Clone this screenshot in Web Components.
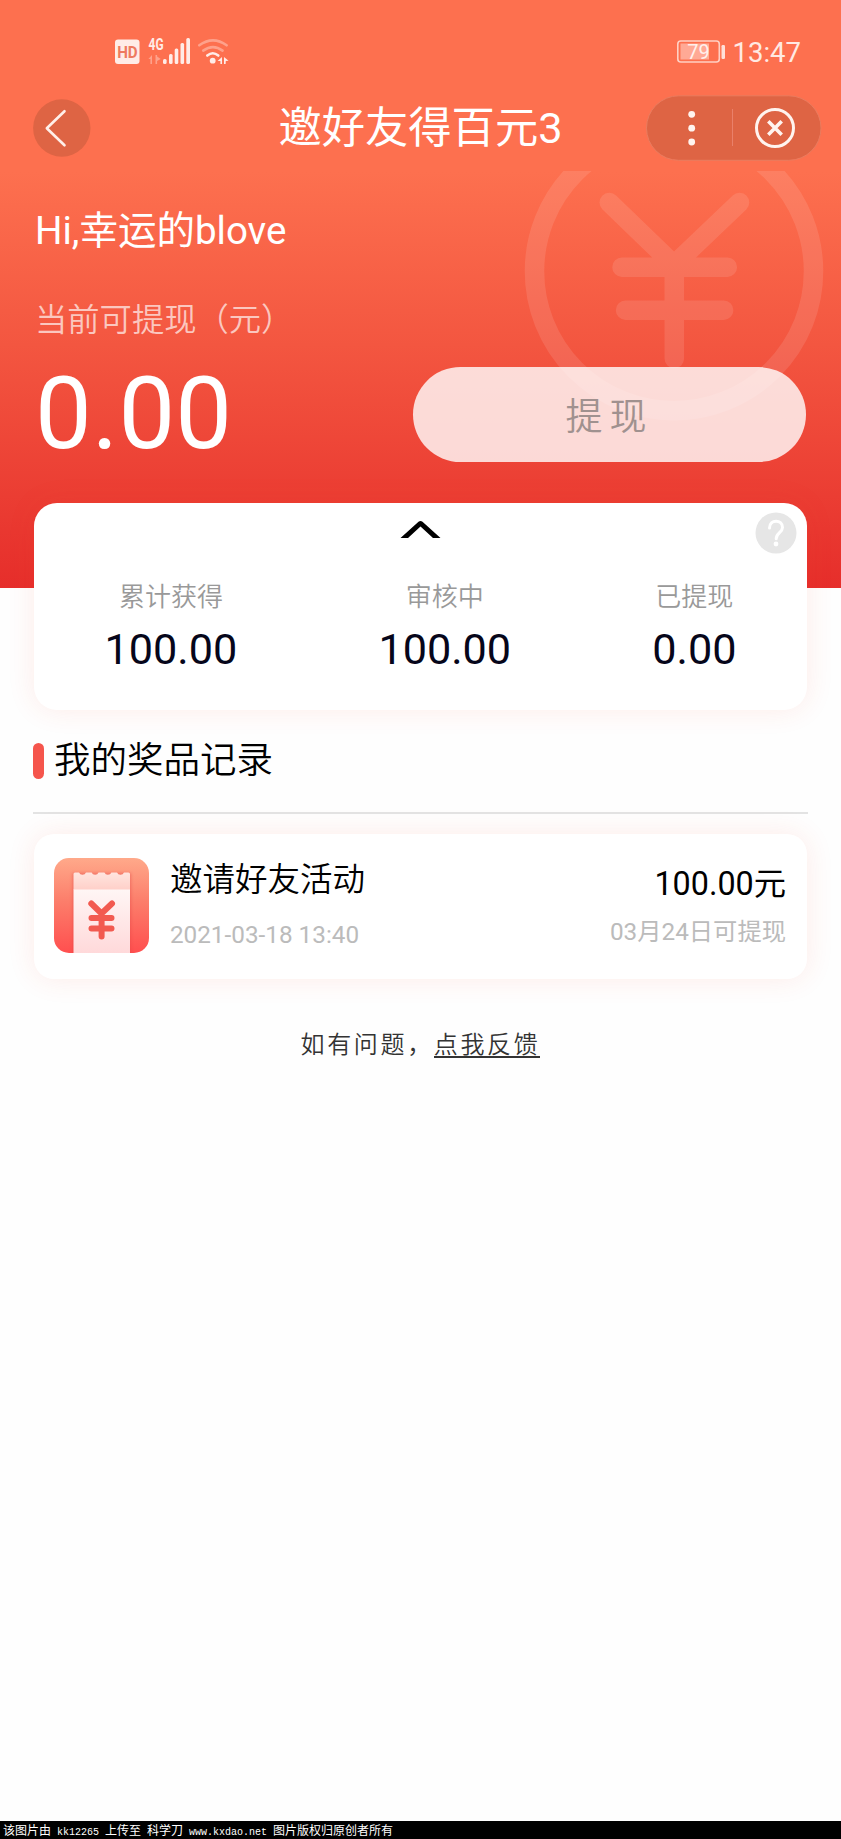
<!DOCTYPE html>
<html lang="zh-CN">
<head>
<meta charset="utf-8">
<title>邀好友得百元3</title>
<style>
html,body{margin:0;background:#fff}
body{font-family:Roboto,"Noto Sans CJK SC",sans-serif;color:#000}
</style>
</head>
<body>
<reward-page></reward-page>
<script>
function define(name, html) {
  const t = document.createElement('template');
  t.innerHTML = html;
  customElements.define(name, class extends HTMLElement {
    constructor() {
      super();
      this.attachShadow({ mode: 'open' }).appendChild(t.content.cloneNode(true));
    }
  });
}

define('status-bar', `
<style>
:host{display:flex;height:88px;box-sizing:border-box;padding:16px 40px 0 114px;align-items:center;justify-content:space-between;color:#ffe9e3}
.right{display:flex;align-items:center;gap:7px}
.time{font-size:27.500px;line-height:32px;position:relative;top:.5px}
svg{display:block}
</style>
<svg width="118" height="32" viewBox="114 36 118 32" fill="#ffece7">
  <rect x="115" y="39.5" width="24.5" height="24.5" rx="3"/>
  <text x="127.4" y="57.6" font-family="Roboto,sans-serif" font-size="16.5" font-weight="700" text-anchor="middle" textLength="20.5" lengthAdjust="spacingAndGlyphs" fill="#ee7a60">HD</text>
  <text x="148.6" y="50.2" font-family="Roboto,sans-serif" font-size="16" font-weight="700" textLength="15" lengthAdjust="spacingAndGlyphs">4G</text>
  <g opacity=".4"><path d="M152 55v9h-1.600v-5h-2zM155.500 55v9h1.600v-3l3.600-2-3.600-2.500v-1.500z"/></g>
  <rect x="163" y="59" width="3.600" height="5" rx="1.500"/>
  <rect x="169" y="54" width="3.600" height="10" rx="1.500"/>
  <rect x="174.700" y="48.500" width="3.600" height="15.500" rx="1.500"/>
  <rect x="180.500" y="43" width="3.600" height="21" rx="1.500"/>
  <rect x="186.300" y="38" width="3.700" height="26" rx="1.500"/>
  <g fill="none" stroke="#ffece7" stroke-width="2.600" stroke-linecap="round">
    <path d="M199.300 45.300Q213 35.500 226.600 45.300" opacity=".4"/>
    <path d="M203.200 50.600Q213 43.500 222.600 50.600" opacity=".4"/>
    <path d="M207.300 55.500Q212.800 51 218.300 55.500"/>
  </g>
  <circle cx="212.700" cy="60.700" r="2.900"/>
  <path d="M222 57v7h-1.600v-3h-2.800zM224 57l4.600 3.800-2.800.2-.2 3H224z"/>
</svg>
<div class="right">
  <svg width="50" height="24" viewBox="675 40 50 24">
    <rect x="676.800" y="41" width="41.500" height="21" rx="3" fill="none" stroke="#ffd0c4" stroke-width="1.600"/>
    <rect x="679.500" y="43.500" width="28.500" height="16" fill="#ffa995"/>
    <rect x="720.500" y="45" width="3.500" height="14" rx="1.200" fill="#ffe0d8"/>
    <text x="697.500" y="59" font-family="Roboto,sans-serif" font-size="20" text-anchor="middle" fill="#fff0ec">79</text>
  </svg>
  <span class="time">13:47</span>
</div>`);

define('nav-bar', `
<style>
:host{display:grid;grid-template-columns:175px 1fr 175px;height:80px;padding:0 20px 0 33px;align-items:center}
h1{margin:0;font-weight:400;font-size:43.300px;line-height:60px;color:#fff;text-align:center;white-space:nowrap;padding:2px 13px 0 0}
svg{display:block}
</style>
<svg width="58" height="58" viewBox="33.500 99 58 58"><circle cx="62.300" cy="128" r="28.700" fill="#de6444"/><path d="M65 111.200 47.300 128.200 65 145.300" fill="none" stroke="#ffefe9" stroke-width="2.600" stroke-linecap="round" stroke-linejoin="round"/></svg>
<h1><slot></slot></h1>
<svg width="176" height="66" viewBox="646 95 176 66">
  <rect x="646.500" y="95.800" width="174.500" height="64.500" rx="32.200" fill="#de6444" stroke="#ea7c5f"/>
  <g fill="#fff4ef"><circle cx="691.700" cy="114.300" r="3.400"/><circle cx="691.700" cy="128.200" r="3.400"/><circle cx="691.700" cy="142" r="3.400"/></g>
  <path d="M732.500 109v37" stroke="#ea806a"/>
  <g fill="none" stroke="#fff4ef"><circle cx="775" cy="128" r="18.500" stroke-width="3"/><path d="m768.300 121.300 13.400 13.400m0-13.400-13.400 13.400" stroke-width="3.600"/></g>
</svg>`);

define('balance-panel', `
<style>
:host{display:block;position:relative;padding:0 35px}
.mark{position:absolute;right:14px;top:2.500px;display:block}
.hi{font-size:38.500px;line-height:50px;padding-top:38px;color:#fff}
.label{font-size:32.300px;line-height:44px;margin-top:42px;color:#fbc7bf;font-weight:350}
.row{display:flex;justify-content:space-between;align-items:center;height:96px;margin-top:24px;position:relative}
.amount{font-size:101px;line-height:96px;color:#fff}
button{font:350 37px/40px Roboto,"Noto Sans CJK SC",sans-serif;letter-spacing:7px;width:393px;height:95px;padding:8px 0 0 0;border:0;border-radius:48px;background:rgba(255,255,255,.8);color:#a0918f}
</style>
<svg class="mark" width="306" height="255" viewBox="521 170.500 306 255" fill="none" stroke="#fff" stroke-width="19.500" opacity=".105">
  <circle cx="674" cy="270.700" r="139.500"/>
  <path d="M609.300 202 674 264.500 739.500 202M622 266.700h105.300M625.600 309.700h98M674.300 264v94" stroke-linecap="round"/>
</svg>
<div class="hi"><slot name="greeting"></slot></div>
<div class="label">当前可提现（元）</div>
<div class="row"><span class="amount"><slot name="amount"></slot></span><button>提现</button></div>`);

define('stat-item', `
<style>
:host{display:flex;flex-direction:column;align-items:center}
.label{font-size:26px;line-height:36px;color:#999;font-weight:350}
.value{font-size:43.200px;line-height:50px;margin-top:10px;color:#06061a}
</style>
<span class="label"><slot name="label"></slot></span><span class="value"><slot></slot></span>`);

define('stats-card', `
<style>
:host{display:block;position:relative;height:207px;margin:0 34px;border-radius:23px;background:#fff;box-shadow:0 0 28px rgba(245,70,40,.1)}
.arrow{display:block;margin:0 auto;padding-top:17px}
.help{position:absolute;right:10px;top:9px}
.stats{display:flex;justify-content:space-around;padding-top:41px}
</style>
<svg class="arrow" width="42" height="18" viewBox="0 0 42 18"><path d="M.5 18 18.500 1.800Q20.500 0 22.500 1.800L40.500 18H33L20.500 6.500 8 18z"/></svg>
<svg class="help" width="42" height="42" viewBox="0 0 42 42"><circle cx="21" cy="21" r="20.500" fill="#e6e6e6"/><path d="M14.500 16c0-9 13-9 13-.5 0 5-6.300 5.500-6.300 11.300" fill="none" stroke="#fff" stroke-width="3" stroke-linecap="round"/><circle cx="21" cy="32" r="2.400" fill="#fff"/></svg>
<div class="stats"><slot></slot></div>`);

define('section-title', `
<style>
:host{display:flex;align-items:center;gap:10px;margin:0 33px;height:103px;padding-bottom:1px;border-bottom:2px solid #e3e3e3;box-sizing:border-box}
i{width:11px;height:36px;border-radius:6px;background:#f5554c}
h2{font-weight:350;font-size:36.500px;line-height:50px;margin:0}
</style>
<i></i><h2><slot></slot></h2>`);

define('prize-icon', `
<style>:host{display:block;width:95px;height:95px}svg{display:block}</style>
<svg width="95" height="95" viewBox="0 0 95 95">
  <defs>
    <linearGradient id="bg" x2="0" y2="1"><stop stop-color="#ffa98a"/><stop offset=".45" stop-color="#fc7e6b"/><stop offset="1" stop-color="#ff4f4f"/></linearGradient>
    <linearGradient id="top" x2="0" y2="1"><stop stop-color="#ffe5df"/><stop offset="1" stop-color="#ffcfc8"/></linearGradient>
    <linearGradient id="paper" x2="0" y2="1"><stop stop-color="#fff6f5"/><stop offset="1" stop-color="#ffd9da"/></linearGradient>
    <filter id="sh" x="-20%" y="-20%" width="140%" height="140%"><feGaussianBlur stdDeviation="1.600"/></filter>
    <clipPath id="clip"><rect width="95" height="95" rx="15"/></clipPath>
  </defs>
  <g clip-path="url(#clip)">
    <rect width="95" height="95" fill="url(#bg)"/>
    <rect x="18.500" y="15" width="58.500" height="85" fill="#e34444" opacity=".45" filter="url(#sh)"/>
    <path d="M19.500 16Q19.500 14.500 21 14.500H25a3.800 3.800 0 0 0 7 0H37.600a3.800 3.800 0 0 0 7 0H50.400a3.800 3.800 0 0 0 7 0H63a3.800 3.800 0 0 0 7 0H74.500Q76 14.500 76 16V32H19.500z" fill="url(#top)"/>
    <path d="M19.500 31.500H76V95H19.500z" fill="url(#paper)"/>
    <path d="M37.300 45.500 47.500 55.500 58 45.500M37.500 60H57.500M37.500 70.500H57.500M47.600 55.500V78.500" fill="none" stroke="#f25a50" stroke-width="6" stroke-linecap="round"/>
  </g>
</svg>`);

define('prize-card', `
<style>
:host{display:flex;height:145px;box-sizing:border-box;margin:20px 34px 0;padding:0 21px 0 20.400px;border-radius:20px;background:#fff;box-shadow:0 0 28px rgba(245,70,40,.1);align-items:center}
prize-icon{flex:none;margin-right:20.500px;margin-top:-3px}
.main{flex:1}
.end{text-align:right}
.name,.sum{font-size:32.500px;line-height:44px}
.sum{font-size:32.300px}
.name{margin-top:-5px;font-weight:350}
.date,.note{font-size:24.300px;line-height:32px;color:#bbb}
.date{margin-top:17px}
.note{margin-top:10px}
.end{margin-top:-4px}
</style>
<prize-icon></prize-icon>
<div class="main"><div class="name"><slot name="name"></slot></div><div class="date"><slot name="date"></slot></div></div>
<div class="end"><div class="sum"><slot name="sum"></slot></div><div class="note"><slot name="note"></slot></div></div>`);

define('feedback-line', `
<style>
:host{display:block;text-align:center;font-size:24px;line-height:34px;letter-spacing:2.650px;color:#333;margin-top:49px;font-weight:350}
a{display:inline-block;line-height:24px;height:23px;border-bottom:2px solid #333;color:inherit}
</style>
如有问题，<a>点我反馈</a>`);

define('credit-bar', `
<style>
:host{display:block;height:18px;background:#000;color:#fff}
div{font:12px/18px "Noto Sans CJK SC",sans-serif;height:18px;padding-left:3px;white-space:pre}
span{font:10px/18px "Liberation Mono",monospace}
</style>
<div>该图片由<span> kk12265 </span>上传至<span> </span>科学刀<span> www.kxdao.net </span>图片版权归原创者所有</div>`);

define('reward-page', `
<style>
:host{display:flex;flex-direction:column;width:841px;height:1839px;overflow:hidden;background:#fefefe}
header{height:588px;flex:none;background:linear-gradient(#fd704f 0,#fd704f 172px,#f35640 345px,#e62e2b 588px)}
stats-card{margin-top:-85px;flex:none}
.fill{flex:1}
</style>
<header>
  <status-bar></status-bar>
  <nav-bar>邀好友得百元3</nav-bar>
  <balance-panel><span slot="greeting">Hi,幸运的blove</span><span slot="amount">0.00</span></balance-panel>
</header>
<stats-card>
  <stat-item><span slot="label">累计获得</span>100.00</stat-item>
  <stat-item><span slot="label">审核中</span>100.00</stat-item>
  <stat-item><span slot="label">已提现</span>0.00</stat-item>
</stats-card>
<section-title style="margin-top:1px">我的奖品记录</section-title>
<prize-card>
  <span slot="name">邀请好友活动</span><span slot="date">2021-03-18 13:40</span>
  <span slot="sum">100.00元</span><span slot="note">03月24日可提现</span>
</prize-card>
<feedback-line></feedback-line>
<div class="fill"></div>
<credit-bar></credit-bar>`);
</script>
</body>
</html>
